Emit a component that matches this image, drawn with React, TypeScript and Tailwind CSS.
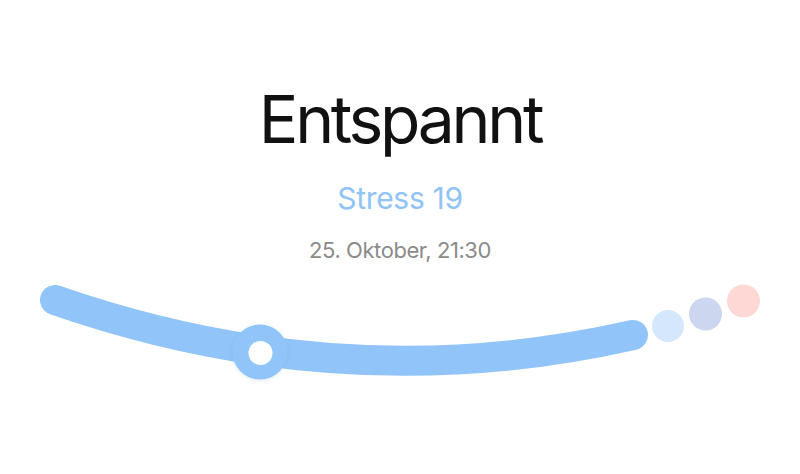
const font = { fontFamily: '"Inter", "Liberation Sans", sans-serif' };

// Stress level track: bent bar with a knob, followed by the next-level dots
function StressCurve() {
  return (
    <svg width="800" height="130" viewBox="0 270 800 130" className="block">
      <defs>
        <filter id="knob-shadow" x="-50%" y="-50%" width="200%" height="200%">
          <feDropShadow dx="0" dy="1" stdDeviation="2" floodColor="#4a7fb8" floodOpacity="0.18" />
        </filter>
      </defs>
      <path
        d="M 55 300 Q 344 400.5 633 335"
        fill="none"
        stroke="#91c5f9"
        strokeWidth="30"
        strokeLinecap="round"
      />
      <g filter="url(#knob-shadow)">
        <circle cx="260" cy="352" r="27.5" fill="#91c5f9" />
      </g>
      <circle cx="260.5" cy="353" r="12" fill="#ffffff" />
      <circle cx="668" cy="326" r="16" fill="#d4e7fd" />
      <circle cx="705.5" cy="314" r="16.5" fill="#cdd6ef" />
      <circle cx="743.5" cy="301" r="16.5" fill="#fdd8d4" />
    </svg>
  );
}

export default function App() {
  return (
    <div className="w-[800px] h-[474px] bg-white overflow-hidden flex flex-col items-center" style={font}>
      <h1 className="mt-[86px] text-[66px] leading-none font-normal tracking-[-0.05em] text-[#111111]">
        Entspannt
      </h1>
      <p className="mt-[31px] text-[30px] leading-none tracking-[-0.01em] text-[#90c3f6]">Stress 19</p>
      <p className="mt-[26px] text-[22px] leading-none tracking-[-0.02em] text-[#8b8b8b]">
        25. Oktober, 21:30
      </p>
      <div className="mt-auto mb-[74px]">
        <StressCurve />
      </div>
    </div>
  );
}
